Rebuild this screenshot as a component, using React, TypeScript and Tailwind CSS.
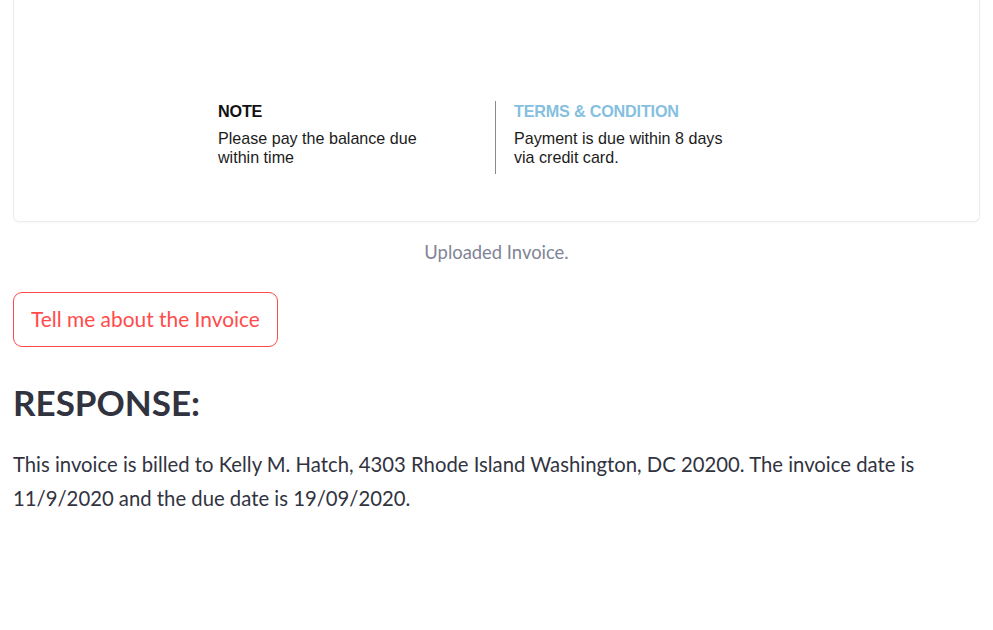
import React from "react";

const InvoiceFooter = () => (
	<div className="flex h-[222px] flex-col rounded-b-md border-x border-b border-[#ececee] bg-white shadow-[0_1px_2px_rgba(0,0,0,0.03)]">
		<div className="flex pl-[190px] pt-[101px] font-['Liberation_Sans',Arial,sans-serif] text-[16.1px] leading-[19px] text-[#1c1c1c]">
			<div className="w-[291px] pl-[14px] pt-[1px]">
				<p className="mb-[8px] text-[16.2px] font-bold tracking-[-0.2px] text-[#111]">NOTE</p>
				<p>Please pay the balance due</p>
				<p>within time</p>
			</div>
			<div className="h-[73px] w-px bg-[#8a8a8a]" />
			<div className="pl-[18px] pt-[1px]">
				<p className="mb-[8px] text-[16.2px] font-bold tracking-[-0.2px] text-[#86bfdf]">
					TERMS &amp; CONDITION
				</p>
				<p>Payment is due within 8 days</p>
				<p>via credit card.</p>
			</div>
		</div>
	</div>
);

export default function App() {
	return (
		<div className="min-h-[630px] bg-white px-[13px] font-['Lato','Noto_Sans',sans-serif] text-[#31333f]">
			<InvoiceFooter />
			<p className="mt-[17px] text-center text-[18.4px] text-[#808495]">Uploaded Invoice.</p>
			<button className="mt-[25px] flex h-[55px] items-center rounded-[9px] border border-[#ff4b4b] bg-white px-[17px] text-[20.9px] text-[#ff4b4b]">
				Tell me about the Invoice
			</button>
			<h2 className="mt-[31px] text-[35px] font-bold leading-[48px] text-[#31333f]">RESPONSE:</h2>
			<p className="mt-[21px] text-[20.3px] leading-[34px] text-[#31333f]">
				This invoice is billed to Kelly M. Hatch, 4303 Rhode Island Washington, DC 20200. The invoice date is
				<br />
				11/9/2020 and the due date is 19/09/2020.
			</p>
		</div>
	);
}
